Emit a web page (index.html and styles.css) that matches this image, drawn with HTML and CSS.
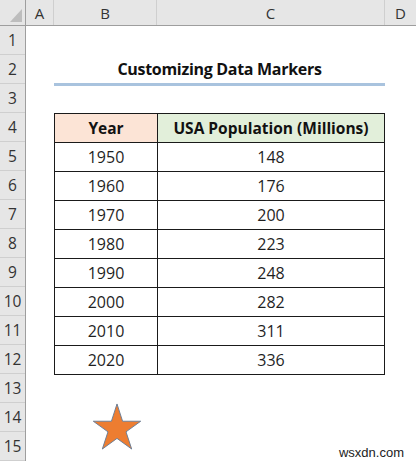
FILE: index.html
```html
<!DOCTYPE html>
<html lang="en">
<head>
  <meta charset="UTF-8" />
  <meta name="viewport" content="width=device-width, initial-scale=1.0"/>
  <title>Customizing Data Markers</title>
  <link rel="stylesheet" href="styles.css">
</head>
<body>
  <div class="sheet">
    <div class="col-heads">
      <div class="corner"><span class="corner-tri"></span></div>
      <div class="col-head">A</div>
      <div class="col-head">B</div>
      <div class="col-head">C</div>
      <div class="col-head last">D</div>
    </div>

    <div class="grid-body">
      <div class="row-nums">
        <div class="row-num">1</div>
        <div class="row-num">2</div>
        <div class="row-num">3</div>
        <div class="row-num">4</div>
        <div class="row-num">5</div>
        <div class="row-num">6</div>
        <div class="row-num">7</div>
        <div class="row-num">8</div>
        <div class="row-num">9</div>
        <div class="row-num">10</div>
        <div class="row-num">11</div>
        <div class="row-num">12</div>
        <div class="row-num">13</div>
        <div class="row-num">14</div>
        <div class="row-num">15</div>
      </div>

      <div class="title">Customizing Data Markers</div>

      <table class="data">
        <tr>
          <th class="year-head">Year</th>
          <th class="pop-head">USA Population (Millions)</th>
        </tr>
        <tr><td>1950</td><td>148</td></tr>
        <tr><td>1960</td><td>176</td></tr>
        <tr><td>1970</td><td>200</td></tr>
        <tr><td>1980</td><td>223</td></tr>
        <tr><td>1990</td><td>248</td></tr>
        <tr><td>2000</td><td>282</td></tr>
        <tr><td>2010</td><td>311</td></tr>
        <tr><td>2020</td><td>336</td></tr>
      </table>

      <div class="marker">
        <svg width="48" height="47" viewBox="0 0 50 49">
          <polygon points="25,1 30.8,19 49.7,19 34.4,30.1 40.3,48 25,36.9 9.7,48 15.6,30.1 0.3,19 19.2,19"
                   fill="#ed7d31" stroke="#6a7d96" stroke-width="1"/>
        </svg>
      </div>
    </div>

    <div class="watermark">wsxdn.com</div>
  </div>
</body>
</html>
```

FILE: styles.css
```css
* {
  margin: 0;
  padding: 0;
  box-sizing: border-box;
}

body {
  background: #fff;
  color: #1f1f1f;
  font-family: "Open Sans", Lato, sans-serif;
}

.sheet {
  position: relative;
  width: 416px;
  height: 462px;
  overflow: hidden;
}

.col-heads {
  display: grid;
  grid-template-columns: 26px 28px 103px 228px 31px;
  height: 26px;
  background: #e6e6e6;
  border-bottom: 1px solid #9e9e9e;
}

.corner {
  position: relative;
  border-right: 1px solid #9e9e9e;
}

.corner-tri {
  position: absolute;
  right: 3px;
  bottom: 3px;
  width: 0;
  height: 0;
  border-left: 12px solid transparent;
  border-bottom: 13px solid #bdbdbd;
}

.col-head {
  display: flex;
  align-items: center;
  justify-content: center;
  font-size: 15px;
  color: #333;
  border-right: 1px solid #cfcfcf;
}

.col-head.last {
  border-right: none;
}

.grid-body {
  display: grid;
  grid-template-columns: 26px 28px 103px 228px 31px;
  grid-template-rows: repeat(15, 29px);
}

.row-nums {
  grid-column: 1;
  grid-row: 1 / -1;
  display: flex;
  flex-direction: column;
  background: #e6e6e6;
  border-right: 1px solid #9e9e9e;
}

.row-num {
  height: 29px;
  display: flex;
  align-items: center;
  justify-content: center;
  font-size: 15.5px;
  color: #333;
  border-bottom: 1px solid #cfcfcf;
}

.title {
  grid-column: 3 / 5;
  grid-row: 2;
  display: flex;
  align-items: center;
  justify-content: center;
  font-size: 16px;
  font-weight: bold;
  color: #111;
  border-bottom: 3px solid #a9c3de;
  margin-bottom: -2px;
  letter-spacing: -0.3px;
}

.data {
  grid-column: 3 / 5;
  grid-row: 4 / 13;
  width: 331px;
  border-collapse: collapse;
  font-size: 16px;
  align-self: start;
}

.data th,
.data td {
  height: 29px;
  border: 1px solid #1a1a1a;
  text-align: center;
  padding: 0;
  color: #1f1f1f;
}

.data th {
  font-size: 15.5px;
  font-weight: bold;
  color: #111;
}

.data th.year-head {
  width: 103px;
  background: #fce4d6;
}

.data th.pop-head {
  background: #e2efda;
}

.marker {
  grid-column: 3;
  grid-row: 14 / 16;
  padding-left: 39px;
}

.marker svg {
  display: block;
}

.watermark {
  position: absolute;
  right: 12px;
  bottom: 2px;
  font-family: "Liberation Sans", Arial, sans-serif;
  font-size: 13px;
  color: #222;
}
```
